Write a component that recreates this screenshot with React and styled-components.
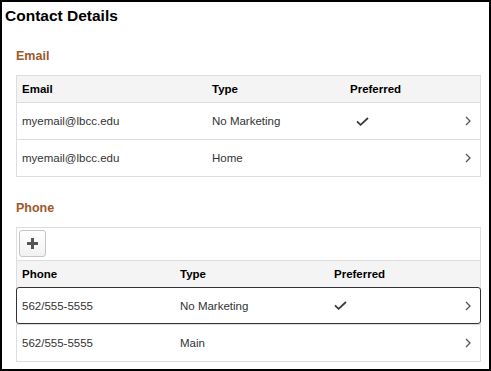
import React from 'react'
import styled, { createGlobalStyle } from 'styled-components'

const GlobalStyle = createGlobalStyle`
  html, body {
    margin: 0;
    padding: 0;
    background: #fff;
  }
  body {
    font-family: "Liberation Sans", Arial, sans-serif;
  }
`

const emails = [
    { address: 'myemail@lbcc.edu', type: 'No Marketing', preferred: true },
    { address: 'myemail@lbcc.edu', type: 'Home', preferred: false },
]

const phones = [
    { number: '562/555-5555', type: 'No Marketing', preferred: true, selected: true },
    { number: '562/555-5555', type: 'Main', preferred: false },
]

const EMAIL_COLS = '190px 138px 1fr auto'
const PHONE_COLS = '158px 154px 1fr auto'

function CheckIcon({ offset }) {
    return (
        <CheckSvg $offset={offset} width="13" height="9" viewBox="0 0 13 9">
            <path d="M1 4.3 L4.6 7.8 L12 1" fill="none" stroke="#3a3a3a" strokeWidth="1.8" />
        </CheckSvg>
    )
}

function ChevronIcon() {
    return (
        <svg width="6" height="10" viewBox="0 0 6 10">
            <path d="M1 1 L5 5 L1 9" fill="none" stroke="#555" strokeWidth="1.3" />
        </svg>
    )
}

function PlusIcon() {
    return (
        <svg width="11" height="11" viewBox="0 0 11 11">
            <rect x="4" y="0" width="3" height="11" fill="#555" />
            <rect x="0" y="4" width="11" height="3" fill="#555" />
        </svg>
    )
}

function App() {
    return (
        <>
            <GlobalStyle />
            <Page>
                <Title>Contact Details</Title>
                <Section>
                    <SectionTitle>Email</SectionTitle>
                    <Table>
                        <HeaderRow $cols={EMAIL_COLS}>
                            <HeadCell>Email</HeadCell>
                            <HeadCell>Type</HeadCell>
                            <HeadCell>Preferred</HeadCell>
                            <span />
                        </HeaderRow>
                        {emails.map((e, i) => (
                            <Row key={i} $cols={EMAIL_COLS}>
                                <Cell>{e.address}</Cell>
                                <Cell>{e.type}</Cell>
                                <Cell>{e.preferred && <CheckIcon offset={6} />}</Cell>
                                <ChevronIcon />
                            </Row>
                        ))}
                    </Table>
                </Section>
                <Section>
                    <SectionTitle>Phone</SectionTitle>
                    <Table>
                        <Toolbar>
                            <AddButton aria-label="Add phone">
                                <PlusIcon />
                            </AddButton>
                        </Toolbar>
                        <HeaderRow $cols={PHONE_COLS}>
                            <HeadCell>Phone</HeadCell>
                            <HeadCell>Type</HeadCell>
                            <HeadCell>Preferred</HeadCell>
                            <span />
                        </HeaderRow>
                        {phones.map((p, i) => (
                            <Row key={i} $cols={PHONE_COLS} $selected={p.selected}>
                                <Cell>{p.number}</Cell>
                                <Cell>{p.type}</Cell>
                                <Cell>{p.preferred && <CheckIcon offset={0} />}</Cell>
                                <ChevronIcon />
                            </Row>
                        ))}
                    </Table>
                </Section>
            </Page>
        </>
    )
}

const Page = styled.div`
width: 491px;
height: 371px;
box-sizing: border-box;
border: 2px solid #000;
overflow: hidden;
background: #fff;
`
const Title = styled.h1`
margin: 5px 0 0 3px;
font-size: 15.5px;
line-height: 18px;
font-weight: bold;
color: #000;
`
const Section = styled.section`
padding: 0 8px 0 14px;
`
const SectionTitle = styled.h2`
margin: 23px 0 11px;
font-size: 12.5px;
line-height: 16px;
font-weight: bold;
color: #a0582a;
`
const Table = styled.div`
border: 1px solid #dddddd;
display: flex;
flex-direction: column;
`
const Toolbar = styled.div`
height: 33px;
box-sizing: border-box;
padding: 2px;
border-bottom: 1px solid #dddddd;
`
const AddButton = styled.button`
width: 27px;
height: 27px;
box-sizing: border-box;
padding: 0;
border: 1px solid #c6c6c6;
border-radius: 3px;
background: linear-gradient(#ffffff, #f1f1f1);
display: flex;
align-items: center;
justify-content: center;
cursor: pointer;
`
const HeaderRow = styled.div`
display: grid;
grid-template-columns: ${p => p.$cols};
align-items: center;
height: 26px;
padding: 0 9px 0 5px;
background: #f4f4f4;
`
const Row = styled.div`
display: grid;
grid-template-columns: ${p => p.$cols};
align-items: center;
height: 37px;
box-sizing: border-box;
padding: 0 9px 0 5px;
border-top: 1px solid #dddddd;
${p => p.$selected && `
  border: 1px solid #333;
  border-radius: 3px;
  margin: 0 -1px;
  position: relative;
`}
`
const HeadCell = styled.span`
font-size: 11.5px;
font-weight: bold;
color: #000;
`
const Cell = styled.span`
font-size: 11.5px;
color: #333;
display: flex;
align-items: center;
`
const CheckSvg = styled.svg`
margin-left: ${p => p.$offset}px;
`

export default App
